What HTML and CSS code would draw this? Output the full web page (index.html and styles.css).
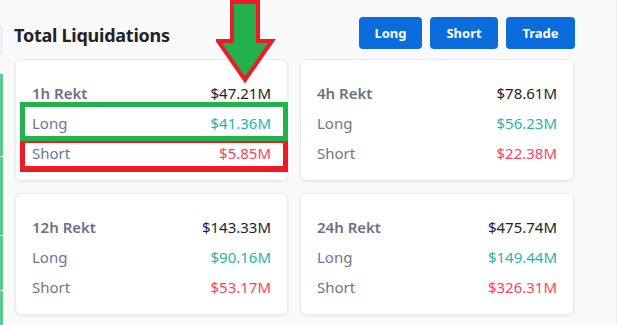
FILE: index.html
```html
<!DOCTYPE html>
<html>
<head>
<meta charset="utf-8">
<link rel="stylesheet" href="styles.css">
</head>
<body>
<div class="edge-top"></div>
<div class="edge-strip">
  <div class="seg s1"></div>
  <div class="seg s2"></div>
  <div class="seg s3"></div>
  <div class="seg s4"></div>
</div>
<main class="page">
  <header class="head">
    <h1 class="title">Total Liquidations</h1>
    <div class="actions">
      <button class="btn b-long">Long</button>
      <button class="btn b-short">Short</button>
      <button class="btn b-trade">Trade</button>
    </div>
  </header>
  <section class="grid">
    <div class="card">
      <div class="row"><span class="lbl head-lbl">1h Rekt</span><span class="val">$47.21M</span></div>
      <div class="row"><span class="lbl">Long</span><span class="val up">$41.36M</span></div>
      <div class="row"><span class="lbl">Short</span><span class="val down">$5.85M</span></div>
    </div>
    <div class="card">
      <div class="row"><span class="lbl head-lbl">4h Rekt</span><span class="val">$78.61M</span></div>
      <div class="row"><span class="lbl">Long</span><span class="val up">$56.23M</span></div>
      <div class="row"><span class="lbl">Short</span><span class="val down">$22.38M</span></div>
    </div>
    <div class="card">
      <div class="row"><span class="lbl head-lbl">12h Rekt</span><span class="val">$143.33M</span></div>
      <div class="row"><span class="lbl">Long</span><span class="val up">$90.16M</span></div>
      <div class="row"><span class="lbl">Short</span><span class="val down">$53.17M</span></div>
    </div>
    <div class="card">
      <div class="row"><span class="lbl head-lbl">24h Rekt</span><span class="val">$475.74M</span></div>
      <div class="row"><span class="lbl">Long</span><span class="val up">$149.44M</span></div>
      <div class="row"><span class="lbl">Short</span><span class="val down">$326.31M</span></div>
    </div>
  </section>
</main>
<div class="mark mark-green"></div>
<div class="mark mark-red"></div>
<svg class="arrow" width="60" height="84" viewBox="0 0 60 84">
  <polygon points="16,2 42,2 42,41 56,41 29,80 2,41 16,41" fill="#22b14c" stroke="#ed1c24" stroke-width="4" stroke-linejoin="miter"/>
</svg>
</body>
</html>
```
FILE: styles.css
```css
* { box-sizing: border-box; }
html, body { margin: 0; padding: 0; }
body {
  width: 617px;
  height: 325px;
  overflow: hidden;
  background: #fafafa;
  font-family: "Noto Sans", "Open Sans", sans-serif;
  position: relative;
  border-right: 1px solid #eeeeee;
}
.page {
  padding: 17px 0 0 15px;
  width: 575px;
}
.head {
  display: flex;
  align-items: center;
  justify-content: space-between;
  height: 32px;
}
.title {
  margin: 0 0 0 -1px;
  font-size: 18px;
  font-weight: 700;
  color: #1e2329;
  letter-spacing: -0.25px;
  padding-top: 3px;
}
.actions { display: flex; gap: 8px; }
.btn {
  height: 32px;
  border: none;
  border-radius: 4px;
  background: #0b6cdc;
  color: #fff;
  font-family: "Noto Sans", sans-serif;
  font-weight: 700;
  font-size: 13px;
  padding: 0;
}
.b-long { width: 63px; }
.b-short { width: 68px; }
.b-trade { width: 69px; }
.grid {
  margin-top: 10px;
  display: grid;
  grid-template-columns: 273px 274px;
  column-gap: 12px;
  row-gap: 12px;
}
.card {
  background: #ffffff;
  border: 1px solid #ececec;
  border-radius: 6px;
  box-shadow: 0 1px 3px rgba(0,0,0,0.08);
  padding: 18px 16px 12px 16px;
  height: 122px;
}
.row {
  height: 30px;
  display: flex;
  align-items: center;
  justify-content: space-between;
  font-size: 15px;
}
.lbl { color: #707590; }
.head-lbl { font-weight: 600; color: #6b7088; }
.val { color: #1e2329; }
.val.up { color: #26b6a2; }
.val.down { color: #f6465d; }

.edge-top {
  position: absolute;
  left: -6px; top: 25px;
  width: 9px; height: 30px;
  border-radius: 4px;
  background: #eef0f3;
}
.edge-strip {
  position: absolute;
  left: 0; top: 74px;
  width: 3px; height: 251px;
  display: flex;
  flex-direction: column;
  gap: 1px;
}
.seg { background: #5ccb8a; }
.s1 { height: 82px; }
.s2 { height: 78px; }
.s3 { height: 54px; }
.s4 { flex: 1; }

.mark {
  position: absolute;
  left: 20px;
  width: 268px;
  border-style: solid;
}
.mark-green {
  top: 102px; height: 39px;
  border-width: 5px;
  border-color: #22b14c;
  z-index: 2;
}
.mark-red {
  top: 139px; height: 33px;
  border-width: 4px 5px 6px 5px;
  border-color: #ed1c24;
  z-index: 1;
}
.arrow {
  position: absolute;
  left: 216px; top: 0;
  z-index: 3;
}
```
